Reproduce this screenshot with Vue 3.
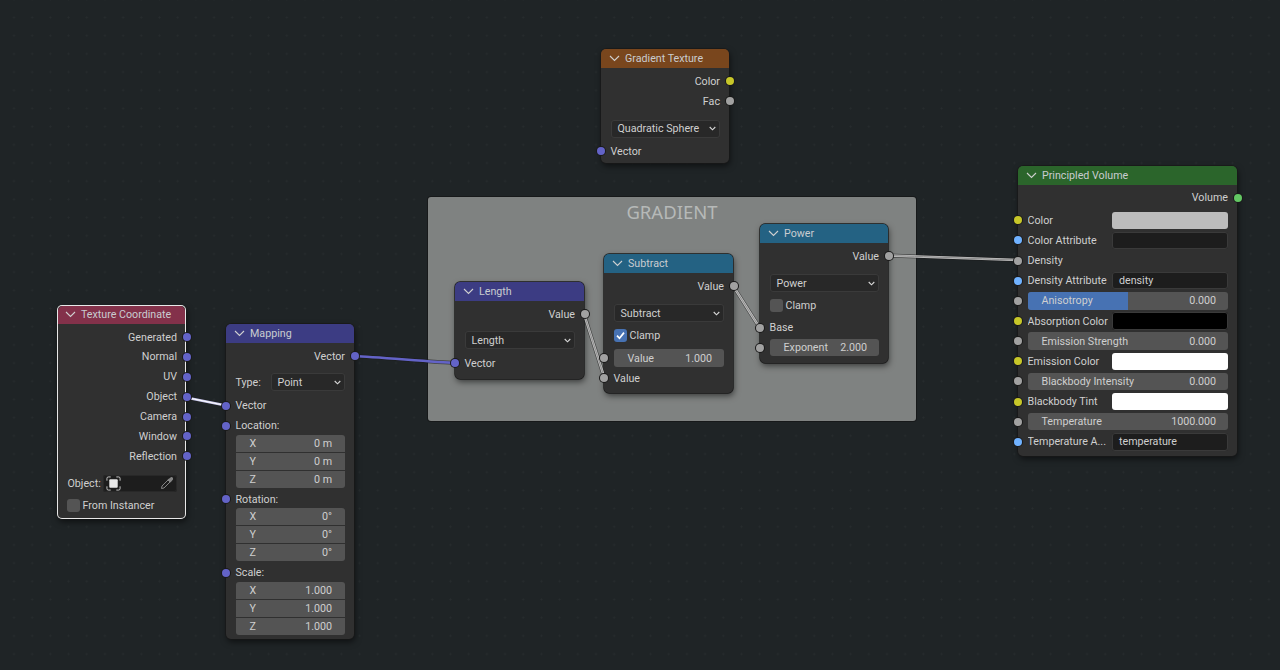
<template>
  <div class="editor">
    <div class="frame"><span class="frame-label">GRADIENT</span></div>

    <div
      v-for="node in nodes"
      :key="node.title"
      :class="['node', node.selected && 'selected']"
      :style="{ left: node.x + 'px', top: node.y + 'px', width: node.w - 1 + 'px', height: node.h - 1 + 'px' }"
    >
      <div :class="['node-header', node.kind]">
        <svg class="chevron" width="11" height="7" viewBox="0 0 11 7">
          <path d="M1 1 L5.5 5.5 L10 1" fill="none" stroke="#d0d0d0" stroke-width="1.1" />
        </svg>
        <span>{{ node.title }}</span>
      </div>
      <div :class="['node-body', node.kind + '-body']">
        <template v-for="(row, i) in node.rows" :key="i">
          <div v-if="row.type === 'gap'" class="gap" :style="{ height: row.h + 'px' }"></div>

          <div v-else-if="row.type === 'out'" class="row out">
            <span>{{ row.label }}</span>
            <i :class="['socket', 'right', row.s]"></i>
          </div>

          <div v-else-if="row.type === 'in'" class="row">
            <i :class="['socket', 'left', row.s]"></i>
            <span>{{ row.label }}</span>
          </div>

          <div v-else-if="row.type === 'select'" class="row">
            <span v-if="row.label" class="side-label">{{ row.label }}</span>
            <div class="select">
              <span>{{ row.value }}</span>
              <svg width="7" height="5" viewBox="0 0 7 5">
                <path d="M.7 1 L3.5 3.8 L6.3 1" fill="none" stroke="#d8d8d8" stroke-width="1.1" />
              </svg>
            </div>
          </div>

          <div v-else-if="row.type === 'check'" class="row check-row">
            <span :class="['check', row.on && 'on']">
              <svg v-if="row.on" width="11" height="11" viewBox="0 0 11 11">
                <path d="M2 5.6 L4.5 8.3 L9 2.6" fill="none" stroke="#fff" stroke-width="1.7" />
              </svg>
            </span>
            <span>{{ row.label }}</span>
          </div>

          <div v-else-if="row.type === 'num'" class="row">
            <i v-if="row.s" :class="['socket', 'left', row.s]"></i>
            <div class="num">
              <b v-if="row.fill" class="num-fill" :style="{ width: row.fill + '%' }"></b>
              <span>{{ row.label }}</span>
              <span>{{ row.value }}</span>
            </div>
          </div>

          <div v-else-if="row.type === 'vec'" class="vec">
            <div v-for="item in row.items" :key="item[0]" class="vec-item">
              <span>{{ item[0] }}</span>
              <span>{{ item[1] }}</span>
            </div>
          </div>

          <div v-else-if="row.type === 'split'" class="row split">
            <i :class="['socket', 'left', row.s]"></i>
            <span class="split-label">{{ row.label }}</span>
            <div :class="['split-field', row.field]">{{ row.value }}</div>
          </div>

          <div v-else-if="row.type === 'object'" class="row">
            <span class="side-label object-label">{{ row.label }}</span>
            <div class="object-field">
              <svg width="15" height="15" viewBox="0 0 16 16">
                <path d="M1 5 V2.5 Q1 1 2.5 1 H5 M11 1 H13.5 Q15 1 15 2.5 V5 M15 11 V13.5 Q15 15 13.5 15 H11 M5 15 H2.5 Q1 15 1 13.5 V11" fill="none" stroke="#cfcfcf" stroke-width="1" />
                <rect x="3.5" y="3.5" width="9" height="9" rx="1" fill="#e8e8e8" />
              </svg>
              <svg width="14" height="14" viewBox="0 0 14 14">
                <path d="M1.5 12.5 L2 10 L8 4 L10 6 L4 12 Z" fill="none" stroke="#858585" stroke-width="1" />
                <path d="M7.5 3.5 L10.5 6.5 L13 3.5 Q13.5 1.5 12 1 Q10.8 .8 10 2 Z" fill="#858585" />
              </svg>
            </div>
          </div>
        </template>
      </div>
    </div>

    <svg class="wires" width="1280" height="670" viewBox="0 0 1280 670">
      <g v-for="wire in wires" :key="wire.d" fill="none">
        <path :d="wire.d" stroke="#1a1a1a" stroke-opacity=".6" stroke-width="3.8" />
        <path :d="wire.d" :stroke="wire.edge" stroke-width="2.5" />
        <path :d="wire.d" :stroke="wire.c" stroke-width="1" />
      </g>
    </svg>
  </div>
</template>

<script setup>
const xyz = (a, b, c) => [['X', a], ['Y', b], ['Z', c]]

const nodes = [
  {
    title: 'Texture Coordinate', kind: 'input', x: 57, y: 305, w: 130, h: 215, selected: true,
    rows: [
      { type: 'gap', h: 3 },
      { type: 'out', label: 'Generated', s: 'vector' },
      { type: 'out', label: 'Normal', s: 'vector' },
      { type: 'out', label: 'UV', s: 'vector' },
      { type: 'out', label: 'Object', s: 'vector' },
      { type: 'out', label: 'Camera', s: 'vector' },
      { type: 'out', label: 'Window', s: 'vector' },
      { type: 'out', label: 'Reflection', s: 'vector' },
      { type: 'gap', h: 7.2 },
      { type: 'object', label: 'Object:' },
      { type: 'gap', h: 2.5 },
      { type: 'check', label: 'From Instancer' },
    ],
  },
  {
    title: 'Mapping', kind: 'vector', x: 226, y: 324, w: 129, h: 316,
    rows: [
      { type: 'gap', h: 3 },
      { type: 'out', label: 'Vector', s: 'vector' },
      { type: 'gap', h: 6 },
      { type: 'select', label: 'Type:', value: 'Point' },
      { type: 'gap', h: 3.5 },
      { type: 'in', label: 'Vector', s: 'vector' },
      { type: 'in', label: 'Location:', s: 'vector' },
      { type: 'vec', items: xyz('0 m', '0 m', '0 m') },
      { type: 'in', label: 'Rotation:', s: 'vector' },
      { type: 'vec', items: xyz('0°', '0°', '0°') },
      { type: 'in', label: 'Scale:', s: 'vector' },
      { type: 'vec', items: xyz('1.000', '1.000', '1.000') },
    ],
  },
  {
    title: 'Length', kind: 'vector', x: 455, y: 282, w: 130, h: 98,
    rows: [
      { type: 'gap', h: 3 },
      { type: 'out', label: 'Value', s: 'value' },
      { type: 'gap', h: 6 },
      { type: 'select', value: 'Length' },
      { type: 'gap', h: 3 },
      { type: 'in', label: 'Vector', s: 'vector' },
    ],
  },
  {
    title: 'Subtract', kind: 'converter', x: 604, y: 254, w: 130, h: 140,
    rows: [
      { type: 'gap', h: 3 },
      { type: 'out', label: 'Value', s: 'value' },
      { type: 'gap', h: 7 },
      { type: 'select', value: 'Subtract' },
      { type: 'gap', h: 2 },
      { type: 'check', label: 'Clamp', on: true },
      { type: 'gap', h: 3 },
      { type: 'num', label: 'Value', value: '1.000', s: 'value' },
      { type: 'in', label: 'Value', s: 'value' },
    ],
  },
  {
    title: 'Power', kind: 'converter', x: 760, y: 224, w: 129, h: 140,
    rows: [
      { type: 'gap', h: 3 },
      { type: 'out', label: 'Value', s: 'value' },
      { type: 'gap', h: 7 },
      { type: 'select', value: 'Power' },
      { type: 'gap', h: 2.5 },
      { type: 'check', label: 'Clamp' },
      { type: 'gap', h: 2 },
      { type: 'in', label: 'Base', s: 'value' },
      { type: 'num', label: 'Exponent', value: '2.000', s: 'value' },
    ],
  },
  {
    title: 'Gradient Texture', kind: 'texture', x: 601, y: 49, w: 129, h: 115,
    rows: [
      { type: 'gap', h: 3 },
      { type: 'out', label: 'Color', s: 'color' },
      { type: 'out', label: 'Fac', s: 'value' },
      { type: 'gap', h: 7.5 },
      { type: 'select', value: 'Quadratic Sphere' },
      { type: 'gap', h: 2.5 },
      { type: 'in', label: 'Vector', s: 'vector' },
    ],
  },
  {
    title: 'Principled Volume', kind: 'shader', x: 1018, y: 166, w: 220, h: 291,
    rows: [
      { type: 'gap', h: 2.5 },
      { type: 'out', label: 'Volume', s: 'shader' },
      { type: 'gap', h: 2.5 },
      { type: 'split', label: 'Color', s: 'color', field: 'grey' },
      { type: 'split', label: 'Color Attribute', s: 'string', field: 'text' },
      { type: 'in', label: 'Density', s: 'value' },
      { type: 'split', label: 'Density Attribute', s: 'string', field: 'text', value: 'density' },
      { type: 'num', label: 'Anisotropy', value: '0.000', s: 'value', fill: 50 },
      { type: 'split', label: 'Absorption Color', s: 'color', field: 'black' },
      { type: 'num', label: 'Emission Strength', value: '0.000', s: 'value' },
      { type: 'split', label: 'Emission Color', s: 'color', field: 'white' },
      { type: 'num', label: 'Blackbody Intensity', value: '0.000', s: 'value' },
      { type: 'split', label: 'Blackbody Tint', s: 'color', field: 'white' },
      { type: 'num', label: 'Temperature', value: '1000.000', s: 'value' },
      { type: 'split', label: 'Temperature A...', s: 'string', field: 'text', value: 'temperature' },
    ],
  },
]

// endpoints read off the sockets, nearly straight at this zoom
const wires = [
  { d: 'M186 397.5 C 194 399, 218 404, 226 405.5', c: '#ffffff', edge: '#c8c8ee' },
  { d: 'M355 356 C 375 357, 435 362, 455 363', c: '#6363c7', edge: '#6363c7' },
  { d: 'M584 313.5 C 587 324, 601 367, 604.5 378', c: '#8e8e8e', edge: '#c0c0c0' },
  { d: 'M733 286 C 738 293, 755 321, 760 328', c: '#8e8e8e', edge: '#c0c0c0' },
  { d: 'M888 255.5 C 910 256, 996 259.5, 1018 260', c: '#8e8e8e', edge: '#c0c0c0' },
]
</script>

<style>
html, body {
  margin: 0;
  background: #1f2426;
}
</style>

<style scoped>
.editor {
  position: relative;
  width: 1280px;
  height: 670px;
  overflow: hidden;
  background-color: #1f2426;
  background-image: radial-gradient(circle, #272c2e 0.8px, transparent 1.2px);
  background-size: 18.2px 18.2px;
  background-position: 4.9px 8.4px;
  font-family: Roboto, "Noto Sans", sans-serif;
  font-size: 10.7px;
  color: #cfcfcf;
}

.frame {
  position: absolute;
  left: 428px;
  top: 197px;
  width: 488px;
  height: 224px;
  box-sizing: border-box;
  background: #7f8281;
  border-radius: 3px;
  box-shadow: 0 0 0 1px #17191a;
  text-align: center;
  padding-top: 4px;
}

.frame-label {
  font-family: "Noto Sans", sans-serif;
  font-size: 18.5px;
  color: #b6b9b8;
  line-height: 22px;
}

.node {
  position: absolute;
  box-sizing: border-box;
  background: #303030;
  border-radius: 5px;
  box-shadow: 0 0 0 0.7px #191919, 1px 3px 6px rgba(0, 0, 0, 0.55);
}

.node.selected {
  box-shadow: inset 0 0 0 1px #e8e8e8, 1px 3px 6px rgba(0, 0, 0, 0.55);
}

.selected .node-header {
  margin: 1px 1px 0;
  height: 17.5px;
  padding-left: 7px;
}

.node-header {
  display: flex;
  align-items: center;
  gap: 5px;
  height: 18.5px;
  padding-left: 8px;
  border-radius: 5px 5px 0 0;
  color: #c9ccd0;
}

.input { background: #83314a; }
.vector { background: #3c3c83; }
.converter { background: #246283; }
.texture { background: #79461d; }
.shader { background: #2b652b; }

.node-body {
  padding: 0.6px 9px 0 9.5px;
}

.row {
  position: relative;
  display: flex;
  align-items: center;
  min-height: 20px;
  white-space: nowrap;
}

.input-body .row { min-height: 19.9px; }
.shader-body .row { min-height: 20.15px; }

.out {
  justify-content: flex-end;
}

.socket {
  position: absolute;
  top: 50%;
  width: 8px;
  height: 8px;
  margin-top: -4px;
  border-radius: 50%;
  box-shadow: 0 0 0 1px #1a1a1a;
  z-index: 2;
}

.socket.left { left: -13.5px; }
.socket.right { right: -14px; }

.socket.vector { background: #6363c7; }
.socket.value { background: #a1a1a1; }
.socket.color { background: #c7c729; }
.socket.shader { background: #63c763; }
.socket.string { background: #70b2ff; }

.side-label {
  width: 35px;
  flex: none;
}

.select {
  flex: 1;
  min-width: 0;
  height: 18px;
  box-sizing: border-box;
  display: flex;
  align-items: center;
  justify-content: space-between;
  padding: 0 4px 0 7px;
  background: #282828;
  border-radius: 3px;
  box-shadow: inset 0 0 0 1px #3a3a3a;
}

.check-row {
  gap: 3px;
}

.check {
  width: 13px;
  height: 13px;
  display: flex;
  align-items: center;
  justify-content: center;
  background: #545454;
  border-radius: 3px;
}

.check.on {
  background: #4772b3;
}

.num {
  position: relative;
  flex: 1;
  height: 17.5px;
  display: flex;
  align-items: center;
  justify-content: space-between;
  padding: 0 12px 0 14px;
  background: #545454;
  border-radius: 3px;
  overflow: hidden;
}

.num span {
  position: relative;
}

.num-fill {
  position: absolute;
  left: 0;
  top: 0;
  bottom: 0;
  background: #4772b3;
}

.vec {
  margin: -0.7px 0 1.2px;
  border-radius: 3px;
  overflow: hidden;
}

.vec-item {
  height: 17px;
  margin-bottom: 1px;
  display: flex;
  align-items: center;
  justify-content: space-between;
  padding: 0 13px 0 14px;
  background: #545454;
}

.vec-item:last-child {
  margin-bottom: 0;
}

.split-label {
  width: 84.5px;
  flex: none;
  overflow: hidden;
}

.split-field {
  flex: 1;
  height: 17.5px;
  box-sizing: border-box;
  display: flex;
  align-items: center;
  padding: 0 7px;
  border-radius: 3px;
  box-shadow: inset 0 0 0 1px #3a3a3a;
}

.split-field.grey { background: #bcbcbc; box-shadow: none; }
.split-field.text { background: #1d1d1d; }
.split-field.black { background: #000; }
.split-field.white { background: #fff; box-shadow: none; }

.object-label {
  width: 36px;
  padding-left: 1px;
  box-sizing: border-box;
}

.object-field {
  flex: 1;
  height: 17.5px;
  display: flex;
  align-items: center;
  justify-content: space-between;
  padding: 0 3px;
  background: #1d1d1d;
  border-radius: 3px;
  box-shadow: inset 0 0 0 1px #282828;
}

.wires {
  position: absolute;
  left: 0;
  top: 0;
  pointer-events: none;
}
</style>
